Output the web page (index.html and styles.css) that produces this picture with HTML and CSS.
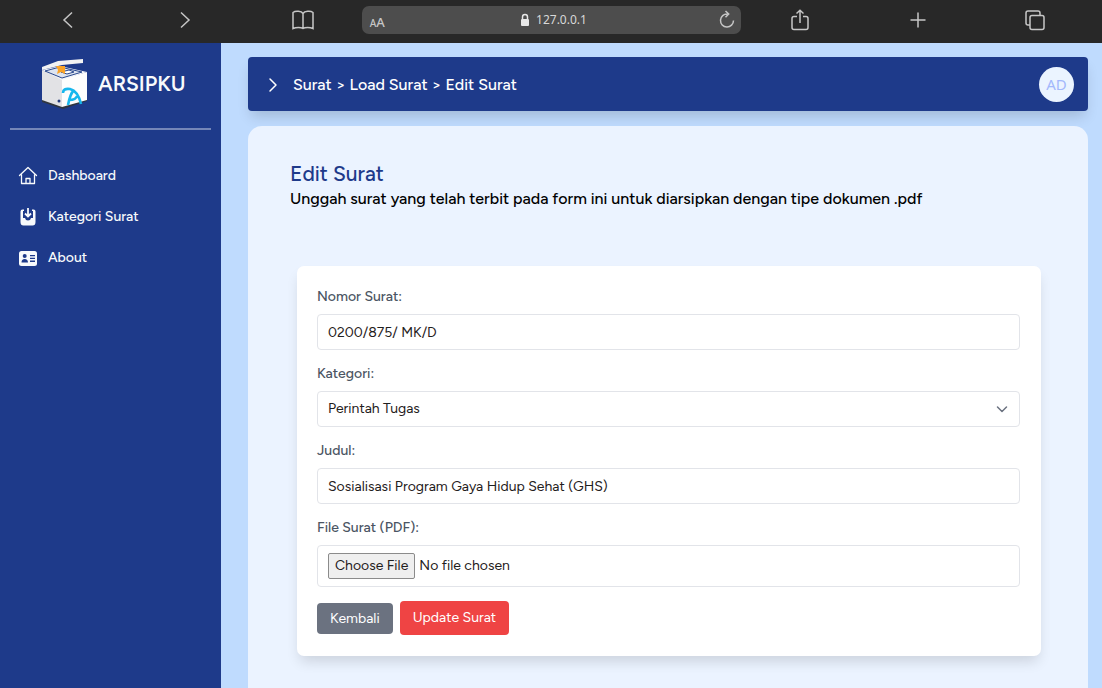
FILE: index.html
```html
<!DOCTYPE html>
<html lang="id">
<head>
<meta charset="utf-8">
<meta name="viewport" content="width=device-width, initial-scale=1">
<title>Edit Surat - ARSIPKU</title>
<link rel="stylesheet" href="styles.css">
</head>
<body>
<div class="browser-bar">
  <button class="bar-button" type="button" aria-label="Back"><svg width="24" height="24" viewBox="0 0 24 24"><path d="M16 4.500 8 12l8 7.500"/></svg></button>
  <button class="bar-button" type="button" aria-label="Forward"><svg width="24" height="24" viewBox="0 0 24 24"><path d="m8 4.500 8 7.500-8 7.500"/></svg></button>
  <button class="bar-button" type="button" aria-label="Bookmarks"><svg width="24" height="24" viewBox="0 0 24 24"><path d="M12 5.500C10.500 3 4.500 2.500 2 4.500v16c3-1.500 8-1.500 10 0 2-1.500 7-1.500 10 0v-16C19.500 2.500 13.500 3 12 5.500Zm0 0v15"/></svg></button>
  <div class="address">
    <span class="text-size"><small>A</small>A</span>
    <span class="host"><svg width="10" height="14" viewBox="0 0 10 14"><rect x="1" y="6" width="8" height="7" rx="1"/><path d="M2.500 6V4a2.500 2.500 0 0 1 5 0v2"/></svg>127.0.0.1</span>
    <button class="bar-button" type="button" aria-label="Reload"><svg width="20" height="20" viewBox="0 0 20 20"><path d="M10.500 4A6.500 6.500 0 1 0 16.500 10.500M8.500 1l3.200 3-3.200 3.200"/></svg></button>
  </div>
  <button class="bar-button" type="button" aria-label="Share"><svg width="24" height="24" viewBox="0 0 24 24"><path d="M9 8.500H6Q4 8.500 4 10.500v9q0 2 2 2h12q2 0 2-2v-9q0-2-2-2h-3M12 15V2.500M8.500 5.500 12 2.200l3.500 3.300"/></svg></button>
  <button class="bar-button" type="button" aria-label="New tab"><svg width="24" height="24" viewBox="0 0 24 24"><path d="M12 4.500v15M4.500 12h15"/></svg></button>
  <button class="bar-button" type="button" aria-label="Tabs"><svg width="24" height="24" viewBox="0 0 24 24"><rect x="7" y="7.500" width="14" height="14" rx="2"/><path d="M7 17H5q-2 0-2-2V5q0-2 2-2h10q2 0 2 2v2.500"/></svg></button>
</div>

<div class="app">
  <aside class="sidebar">
    <a class="brand" href="#">
      <svg width="48" height="52" viewBox="0 0 48 52">
        <path d="M2 40 22 47 47 40v3L23 51 2 44Z" fill="#303640"/>
        <path d="M2 12 22 21v28L2 42Z" fill="#e2e2e5"/>
        <path d="M22 21 47 14v28L22 49Z" fill="#fdfdfd"/>
        <path d="m2 12 18-4 27 6-25 8Z" fill="#f4f6fa"/>
        <path d="m5 13 15-4 22 5-20 6Z" fill="#dde4f0" stroke="#29488e"/>
        <path d="m21 14 8-2 5 2-7 2Z" fill="#fff" stroke="#29488e"/>
        <path d="M2 9 18 3l25-2v4L22 7 2 12Z" fill="#f2f2f3"/>
        <path d="M16 8h9v8l-4-2-4 2 1-4Z" fill="#faa327"/>
        <path d="M23 35q0-5 7-4 8 2 11 15M34 32q-4 4-6 15M29 42q7 0 8-4" fill="none" stroke="#18b7ed" stroke-width="2.600"/>
        <circle cx="19" cy="43" r="1.500" fill="#243b7d"/>
      </svg>
      <span>ARSIPKU</span>
    </a>
    <nav class="menu">
      <a href="#"><svg width="20" height="20" viewBox="0 0 20 20"><path d="m1.500 9.500 8.500-8 8.500 8M3.500 8.500v9h13v-9M8 17.500v-5h4v5" fill="none" stroke="currentColor" stroke-width="1.300" stroke-linejoin="round" stroke-linecap="round"/></svg>Dashboard</a>
      <a href="#"><svg width="20" height="20" viewBox="0 0 20 20"><path d="M6 2.500H4.500q-2 0-2 2V15q0 3.500 3 3.500h9q3 0 3-3.500V4.500q0-2-2-2H14V4h1v7h-2q-.5 2.500-3 2.500T7 11H5V4h1Z" fill="currentColor"/><path d="M10 1v8M7 6.500 10 9.500l3-3" fill="none" stroke="currentColor" stroke-width="1.800"/></svg>Kategori Surat</a>
      <a href="#"><svg width="20" height="20" viewBox="0 0 20 20"><rect x="1" y="3" width="18" height="15" rx="2.500" fill="currentColor"/><circle cx="6.700" cy="8" r="2" fill="#1e3a8a"/><path d="M3.500 14.500q0-3.500 3.200-3.500t3.300 3.500ZM12 7h5v1.300h-5Zm0 2.800h5v1.300h-5Zm0 2.800h5v1.300h-5Z" fill="#1e3a8a"/></svg>About</a>
    </nav>
  </aside>

  <div class="content">
    <header class="page-bar">
      <button class="toggle" type="button" aria-label="Toggle sidebar"><svg width="22" height="22" viewBox="0 0 22 22"><path d="m8 6 6 6-6 6"/></svg></button>
      <div class="crumbs">Surat &gt; Load Surat &gt; Edit Surat</div>
      <button class="avatar" type="button">AD</button>
    </header>
    <main class="panel">
      <h1>Edit Surat</h1>
      <p>Unggah surat yang telah terbit pada form ini untuk diarsipkan dengan tipe dokumen .pdf</p>
      <form class="form-card">
        <div class="field"><label for="nomor">Nomor Surat:</label><input class="control" id="nomor" type="text" value="0200/875/ MK/D"></div>
        <div class="field"><label for="kategori">Kategori:</label>
          <div class="select-wrap"><select class="control" id="kategori"><option>Perintah Tugas</option></select><svg width="20" height="20" viewBox="0 0 20 20"><path d="m5.500 8 4.500 4.500L14.500 8"/></svg></div>
        </div>
        <div class="field"><label for="judul">Judul:</label><input class="control" id="judul" type="text" value="Sosialisasi Program Gaya Hidup Sehat (GHS)"></div>
        <div class="field"><label for="berkas">File Surat (PDF):</label><input class="control file" id="berkas" type="file" accept=".pdf"></div>
        <div class="actions"><a class="button back" href="#">Kembali</a><button class="button update" type="button">Update Surat</button></div>
      </form>
    </main>
  </div>
</div>
</body>
</html>
```
FILE: styles.css
```css
* { box-sizing: border-box; }
html, body { height: 100%; }
body {
  margin: 0;
  display: flex;
  flex-direction: column;
  overflow: hidden;
  background: #bfdbfe;
  font-family: Figtree, Inter, "Liberation Sans", sans-serif;
  font-size: 14px;
  line-height: 20px;
}
button, input, select { font: inherit; }
button { border: 0; padding: 0; cursor: pointer; }
a { color: inherit; text-decoration: none; }
svg { display: block; flex: none; }

.browser-bar {
  flex: none;
  height: 43px;
  padding: 0 8px 3px 9px;
  display: grid;
  grid-template-columns: 1fr 1fr 1fr 3.23fr 1fr 1fr 1fr;
  align-items: center;
  justify-items: center;
  background: #282828;
  color: #c6c6c6;
}
.bar-button { background: none; color: inherit; }
.bar-button svg { fill: none; stroke: currentColor; stroke-width: 1.5; }
.address {
  width: 100%;
  height: 28px;
  padding: 0 4px 0 8px;
  display: grid;
  grid-template-columns: 1fr auto 1fr;
  align-items: center;
  border-radius: 7px;
  background: #4d4d4d;
  font-family: "Noto Sans", sans-serif;
  font-size: 12px;
}
.address .bar-button { justify-self: end; }
.text-size { padding-top: 4px; font-size: 13px; font-weight: 500; }
.text-size small { font-size: 10px; }
.host { display: flex; align-items: center; gap: 6px; color: #d8d8d8; }
.host rect { fill: #e8e8e8; }
.host path { fill: none; stroke: #e8e8e8; stroke-width: 1.5; }

.app { flex: 1; min-height: 0; display: flex; }
.sidebar {
  flex: none;
  width: 221px;
  padding: 0 10px;
  background: #1e3a8a;
  color: #f8fafc;
}
.brand {
  height: 87px;
  padding: 0 0 4px 30px;
  display: flex;
  align-items: center;
  gap: 10px;
  border-bottom: 2px solid #7586b8;
  font-size: 21px;
  font-weight: 600;
}
.menu {
  padding: 36px 8px;
  display: grid;
  gap: 21px;
  font-weight: 500;
}
.menu a { display: flex; align-items: center; gap: 10px; }

.content {
  flex: 1;
  min-width: 0;
  padding: 14px 14px 0 27px;
  display: flex;
  flex-direction: column;
  gap: 15px;
}
.page-bar {
  flex: none;
  height: 54px;
  padding: 0 14px;
  display: flex;
  align-items: center;
  gap: 9px;
  border-radius: 4px;
  background: #1e3a8a;
  color: #fff;
  box-shadow: 0 8px 14px -3px rgb(0 0 0 / 16%);
}
.toggle { background: none; }
.toggle svg { fill: none; stroke: #fff; stroke-width: 1.5; stroke-linecap: round; stroke-linejoin: round; }
.crumbs { flex: 1; padding-top: 2px; font-size: 16px; font-weight: 500; }
.avatar {
  width: 35px;
  height: 35px;
  border-radius: 50%;
  background: #ebf4ff;
  color: #a3b8fc;
  font-family: "Noto Sans", sans-serif;
  font-size: 15px;
}
.panel {
  flex: 1;
  padding: 34px 42px 0;
  border-radius: 14px 14px 0 0;
  background: #ebf3ff;
}
h1 { margin: 0; font-size: 21px; line-height: 28px; font-weight: 500; color: #1e3a8a; }
.panel p { margin: 0; font-size: 16px; line-height: 22px; font-weight: 500; color: #000; }
.form-card {
  margin: 56px 5px 0 7px;
  padding: 20px 21px 21px 20px;
  border-radius: 7px;
  background: #fff;
  box-shadow: 0 8px 14px -3px rgb(0 0 0 / 14%);
}
.field { display: grid; gap: 6px; margin-bottom: 13px; }
.field label { line-height: 22px; font-weight: 500; color: #4b5563; }
.control {
  width: 100%;
  height: 36px;
  padding: 0 10px;
  border: 1px solid #e2e4e9;
  border-radius: 4px;
  background: #fff;
  color: #1f2020;
}
.select-wrap { display: grid; align-items: center; }
.select-wrap > * { grid-area: 1 / 1; }
.select-wrap select { appearance: none; }
.select-wrap svg { justify-self: end; margin-right: 8px; pointer-events: none; fill: none; stroke: #6b7280; stroke-width: 1.5; stroke-linecap: round; stroke-linejoin: round; }
.file { height: 42px; padding: 7px 10px; }
.file::file-selector-button {
  height: 26px;
  margin-right: 4px;
  padding: 0 6px;
  border: 1px solid #8b8b8b;
  border-radius: 2px;
  background: #efefef;
  color: #1f2020;
  font: inherit;
}
.actions { display: flex; align-items: center; gap: 7px; padding-top: 1px; }
.button { padding: 0 13px; border-radius: 4px; color: #fff; }
.back { line-height: 31px; background: #6b7280; }
.update { line-height: 34px; background: #ef4444; }
```
